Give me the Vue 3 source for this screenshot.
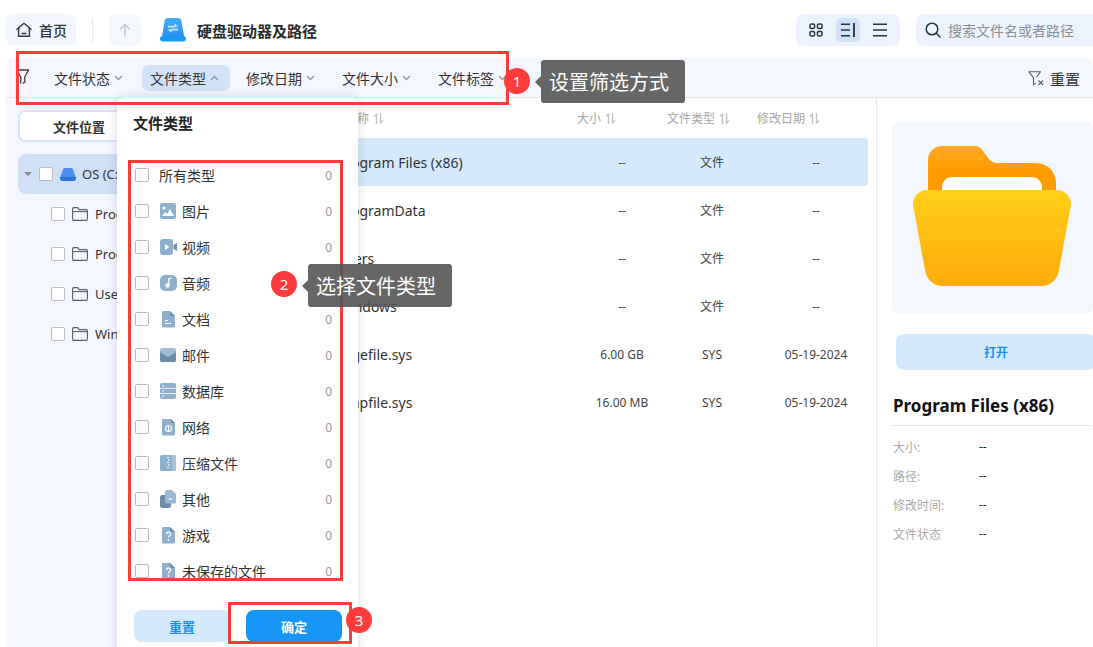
<script setup>
const filters = [
  { label: '文件状态' },
  { label: '文件类型', active: true },
  { label: '修改日期' },
  { label: '文件大小' },
  { label: '文件标签' }
]
const tree = ['Program Files (x86)', 'ProgramData', 'Users', 'Windows']
const types = [
  { label: '所有类型', icon: '' },
  { label: '图片', icon: 'image' },
  { label: '视频', icon: 'video' },
  { label: '音频', icon: 'audio' },
  { label: '文档', icon: 'doc' },
  { label: '邮件', icon: 'mail' },
  { label: '数据库', icon: 'db' },
  { label: '网络', icon: 'net' },
  { label: '压缩文件', icon: 'zip' },
  { label: '其他', icon: 'other' },
  { label: '游戏', icon: 'unknown' },
  { label: '未保存的文件', icon: 'unknown' }
]
const files = [
  { name: 'Program Files (x86)', size: '--', type: '文件', date: '--', selected: true },
  { name: 'ProgramData', size: '--', type: '文件', date: '--' },
  { name: 'Users', size: '--', type: '文件', date: '--' },
  { name: 'Windows', size: '--', type: '文件', date: '--' },
  { name: 'pagefile.sys', size: '6.00 GB', type: 'SYS', date: '05-19-2024', indent: -2 },
  { name: 'swapfile.sys', size: '16.00 MB', type: 'SYS', date: '05-19-2024', indent: -3 }
]
const columns = ['大小', '文件类型', '修改日期']
const props = ['大小:', '路径:', '修改时间:', '文件状态']
</script>

<template>
  <div class="app">
    <header class="top">
      <button class="home">
        <svg width="16" height="16" viewBox="0 0 16 16" fill="none" stroke="#333c48" stroke-width="1.5" stroke-linejoin="round" stroke-linecap="round">
          <path d="M1 7.2 8 1.2l7 6" />
          <path d="M2.6 6v8.200h10.800V6" />
          <path d="M6 11.400h4" />
        </svg>
        首页
      </button>
      <span class="sep"></span>
      <button class="up">
        <svg width="14" height="14" viewBox="0 0 14 14" fill="none" stroke="#c3cad3" stroke-width="1.6" stroke-linecap="round" stroke-linejoin="round">
          <path d="M7 13V1.500M2.500 6 7 1.500 11.500 6" />
        </svg>
      </button>
      <svg class="logo" width="26" height="24" viewBox="0 0 26 24">
        <defs>
          <linearGradient id="dome" x1="0" y1="0" x2="0" y2="1">
            <stop offset="0" stop-color="#45aefc" />
            <stop offset="1" stop-color="#2b8ff0" />
          </linearGradient>
        </defs>
        <path d="M4.500 3.500A3.500 3.500 0 0 1 8 0h10a3.500 3.500 0 0 1 3.500 3.500L24 18H2Z" fill="url(#dome)" />
        <rect x="0" y="18" width="26" height="5.500" rx="2.700" fill="#159bf5" />
        <path d="M8 8.600h7.500M18 11.600h-7.500" fill="none" stroke="#cfe9ff" stroke-width="1.600" />
        <path d="M14.500 5.400l4 3.200h-4ZM11.500 14.800l-4-3.200h4Z" fill="#cfe9ff" />
      </svg>
      <h1 class="title">硬盘驱动器及路径</h1>
      <div class="views">
        <span class="view">
          <svg width="14" height="14" viewBox="0 0 14 14" fill="none" stroke="#2a3340" stroke-width="1.5">
            <rect x="1" y="1" width="4.600" height="4.600" rx="1.400" />
            <rect x="8.400" y="1" width="4.600" height="4.600" rx="1.400" />
            <rect x="1" y="8.400" width="4.600" height="4.600" rx="1.400" />
            <rect x="8.400" y="8.400" width="4.600" height="4.600" rx="1.400" />
          </svg>
        </span>
        <span class="view on">
          <svg width="14" height="14" viewBox="0 0 14 14" fill="none" stroke="#2a3340" stroke-width="1.5">
            <path d="M0 1.200h9M0 7h9M0 12.800h9" />
            <path d="M13 0v14" stroke-width="1.8" />
          </svg>
        </span>
        <span class="view">
          <svg width="14" height="14" viewBox="0 0 14 14" fill="none" stroke="#2a3340" stroke-width="1.5">
            <path d="M0 1.200h14M0 7h14M0 12.800h14" />
          </svg>
        </span>
      </div>
      <div class="search">
        <svg width="16" height="16" viewBox="0 0 16 16" fill="none" stroke="#2a3340" stroke-width="1.5" stroke-linecap="round">
          <circle cx="7" cy="7" r="5.800" />
          <path d="M11.500 11.500 15 15" />
        </svg>
        <span>搜索文件名或者路径</span>
      </div>
    </header>

    <nav class="filters">
      <svg class="funnel" width="15" height="16" viewBox="0 0 15 16" fill="none" stroke="#333c48" stroke-width="1.300" stroke-linejoin="round">
        <path d="M1 1h13M1.500 1 5.800 8v6.500M13.500 1 9.800 8v5l-2 1.500" />
      </svg>
      <div v-for="f in filters" :key="f.label" class="filter" :class="{ active: f.active }">
        {{ f.label }}
        <svg width="9" height="6" viewBox="0 0 9 6" fill="none" stroke="#8b929c" stroke-width="1.300">
          <path :d="f.active ? 'M1 5l3.500-3.500L8 5' : 'M1 1l3.500 3.500L8 1'" />
        </svg>
      </div>
      <div class="clear">
        <svg width="17" height="15" viewBox="0 0 17 15" fill="none" stroke="#555d68" stroke-width="1.100" stroke-linejoin="round">
          <path d="M.5 .8h12.500M1 .8l4.500 6v7l2-1.500M12.500 .8 8.500 6.300" />
          <path d="M10.500 9.500l4.500 4.500M15 9.500 10.500 14" />
        </svg>
        重置
      </div>
    </nav>

    <div class="body">
      <aside class="side">
        <div class="tab">文件位置</div>
        <div class="drive">
          <i class="caret"></i>
          <i class="box"></i>
          <svg width="16" height="13" viewBox="0 0 16 13">
            <path d="M3 1.500A1.500 1.500 0 0 1 4.500 0h7A1.500 1.500 0 0 1 13 1.500L16 10H0Z" fill="#4a90f2" />
            <path d="M0 9h16v1.500A2.500 2.500 0 0 1 13.500 13h-11A2.500 2.500 0 0 1 0 10.500Z" fill="#2a74dc" />
          </svg>
          <span>OS (C:)</span>
        </div>
        <div v-for="t in tree" :key="t" class="node">
          <i class="box"></i>
          <svg width="16" height="14" viewBox="0 0 16 14" fill="none" stroke="#555d68" stroke-width="1.100" stroke-linejoin="round">
            <path d="M.6 12V2A1.400 1.400 0 0 1 2 .6h3.600l1.700 2H14A1.400 1.400 0 0 1 15.400 4v8A1.400 1.400 0 0 1 14 13.400H2A1.400 1.400 0 0 1 .6 12Z" />
            <path d="M.6 4.600h14.800" />
          </svg>
          <span>{{ t }}</span>
        </div>
      </aside>

      <main class="list">
        <div class="grid head">
          <div class="name-cell hname">名称 <svg class="sort" width="11" height="11" viewBox="0 0 11 11" fill="none" stroke="#c4c4c4" stroke-width="1.400"><path d="M3.500 11V1L1 3.500M7.500 0v10L10 7.500" /></svg></div>
          <div v-for="c in columns" :key="c">{{ c }} <svg class="sort" width="11" height="11" viewBox="0 0 11 11" fill="none" stroke="#c4c4c4" stroke-width="1.400"><path d="M3.500 11V1L1 3.500M7.500 0v10L10 7.500" /></svg></div>
        </div>
        <div v-for="f in files" :key="f.name" class="grid row" :class="{ selected: f.selected }">
          <div class="name-cell fname"><span :style="{ marginLeft: (f.indent || 0) + 'px' }">{{ f.name }}</span></div>
          <div class="val">{{ f.size }}</div>
          <div class="val">{{ f.type }}</div>
          <div class="val date">{{ f.date }}</div>
        </div>
      </main>

      <section class="panel">
        <div class="preview">
          <svg width="201" height="192" viewBox="0 0 201 192">
            <defs>
              <linearGradient id="back" x1="0" y1="0" x2="0" y2="1">
                <stop offset="0" stop-color="#ffa824" />
                <stop offset=".5" stop-color="#ff9c00" />
              </linearGradient>
              <linearGradient id="front" x1="0" y1="0" x2="0" y2="1">
                <stop offset="0" stop-color="#ffd01a" />
                <stop offset="1" stop-color="#ffab0b" />
              </linearGradient>
            </defs>
            <path d="M36 70V38a14 14 0 0 1 14-14h32q6 0 9 5l6 8q3 4 8 4h39a20 20 0 0 1 20 20v14Z" fill="url(#back)" />
            <path d="M50 70V65a10 10 0 0 1 10-10h80a10 10 0 0 1 10 10v5Z" fill="#fff" />
            <path d="M35 68h130a14 14 0 0 1 14 15l-12 65a18 18 0 0 1-18 16H51a18 18 0 0 1-18-16L21 83a14 14 0 0 1 14-15Z" fill="url(#front)" />
          </svg>
        </div>
        <button class="open">打开</button>
        <h2 class="pname">Program Files (x86)</h2>
        <dl class="props">
          <div v-for="p in props" :key="p" class="prop">
            <dt>{{ p }}</dt>
            <dd>--</dd>
          </div>
        </dl>
      </section>
    </div>

    <div class="popup">
      <div class="pop-title">文件类型</div>
      <div class="types">
        <div v-for="t in types" :key="t.label" class="type">
          <i class="box"></i>
          <svg v-if="t.icon" class="ticon" width="17" height="18" viewBox="0 0 17 18">
            <template v-if="t.icon === 'image'">
              <rect y="1" width="16" height="16" rx="2" fill="#8eb0cc" />
              <circle cx="4" cy="6" r="1.600" fill="#fff" />
              <path d="M2 14l3-4 2 2 3-5 4 7Z" fill="#fff" />
            </template>
            <template v-else-if="t.icon === 'video'">
              <rect y="1" width="13" height="16" rx="3" fill="#8eb0cc" />
              <path d="M5 6l4.500 3L5 12Z" fill="#fff" />
              <path d="M13.500 7 17 5v8l-3.500-2Z" fill="#6d90ad" />
            </template>
            <template v-else-if="t.icon === 'audio'">
              <rect y="1" width="17" height="16" rx="5" fill="#8eb0cc" />
              <circle cx="7.500" cy="11.500" r="2.200" fill="#fff" />
              <path d="M8.800 11V5l2.700-.8" stroke="#fff" stroke-width="1.300" fill="none" />
            </template>
            <template v-else-if="t.icon === 'doc'">
              <path d="M3 1h7l5 5v10a1.500 1.500 0 0 1-1.500 1.500h-10A1.500 1.500 0 0 1 2 16V2a1 1 0 0 1 1-1Z" fill="#8eb0cc" />
              <path d="M10 1l5 5h-5Z" fill="#6d90ad" />
              <path d="M5 10.500h3M5 13.500h6" stroke="#fff" stroke-width="1.100" />
            </template>
            <template v-else-if="t.icon === 'mail'">
              <rect y="2" width="16" height="14" rx="2" fill="#a0bdd5" />
              <path d="M0 6l8 5 8-5v8a2 2 0 0 1-2 2H2a2 2 0 0 1-2-2Z" fill="#6d8ca8" />
            </template>
            <template v-else-if="t.icon === 'db'">
              <rect y="1" width="16" height="16" rx="2" fill="#8eb0cc" />
              <path d="M0 6.300h16M0 11.600h16" stroke="#eef3f8" stroke-width="1" />
              <path d="M2.500 3.700h1.500M2.500 9h1.500M2.500 14.300h1.500" stroke="#fff" stroke-width="1.200" />
            </template>
            <template v-else-if="t.icon === 'net'">
              <path d="M3 1h8l4 4v11a1.500 1.500 0 0 1-1.500 1.500h-10A1.500 1.500 0 0 1 2 16V2a1 1 0 0 1 1-1Z" fill="#8eb0cc" />
              <path d="M11 1l4 4h-4Z" fill="#6d90ad" />
              <circle cx="8.500" cy="10.500" r="3" fill="none" stroke="#fff" stroke-width="1.100" />
              <path d="M8.500 7.500v6" stroke="#fff" stroke-width="1.100" />
            </template>
            <template v-else-if="t.icon === 'zip'">
              <rect y="1" width="16" height="16" rx="1.500" fill="#8eb0cc" />
              <path d="M12 1h2.500A1.500 1.500 0 0 1 16 2.500v13a1.500 1.500 0 0 1-1.500 1.500H12Z" fill="#a8c3da" />
              <path d="M7 3.500h2M8 6h2M7 8.500h2M8 11h2M7 13.500h2" stroke="#fff" stroke-width="1.200" />
            </template>
            <template v-else-if="t.icon === 'other'">
              <rect y="5" width="11" height="13" rx="2.500" fill="#6d8ca8" />
              <path d="M6.500 0H12l4 4v8a1.500 1.500 0 0 1-1.500 1.500h-8A1.500 1.500 0 0 1 5 12V1.500A1.500 1.500 0 0 1 6.500 0Z" fill="#9ab8d2" />
              <path d="M8.500 9h3.500" stroke="#fff" stroke-width="1.200" />
            </template>
            <template v-else>
              <path d="M3 1h7l5 5v10a1.500 1.500 0 0 1-1.500 1.500h-10A1.500 1.500 0 0 1 2 16V2a1 1 0 0 1 1-1Z" fill="#8eb0cc" />
              <path d="M10 1l5 5h-5Z" fill="#6d90ad" />
              <path d="M6.500 8a2 2 0 1 1 3 1.700c-.8.500-1 .9-1 1.800" fill="none" stroke="#fff" stroke-width="1.300" />
              <circle cx="8.500" cy="14" r=".9" fill="#fff" />
            </template>
          </svg>
          <span class="tlabel" :class="{ plain: !t.icon }">{{ t.label }}</span>
          <span class="count">0</span>
        </div>
      </div>
      <div class="pop-foot">
        <button class="reset">重置</button>
        <button class="ok">确定</button>
      </div>
    </div>

    <i class="mark m1"></i>
    <i class="mark m2"></i>
    <i class="mark m3"></i>
    <span class="badge b1">1</span>
    <span class="badge b2">2</span>
    <span class="badge b3">3</span>
    <span class="tip t1">设置筛选方式</span>
    <span class="tip t2">选择文件类型</span>
  </div>
</template>

<style>
html, body { margin: 0; background: #fff; }
</style>

<style scoped>
* { box-sizing: border-box; }
.app {
  position: relative;
  width: 1093px;
  height: 647px;
  overflow: hidden;
  background: #fff;
  color: #222;
  font-family: "Noto Sans", "Noto Sans CJK SC", sans-serif;
  font-size: 14px;
}
button { font-family: inherit; border: 0; padding: 0; }
i { display: block; font-style: normal; }

.top { display: flex; align-items: center; height: 58px; padding: 14px 0 12px 6px; }
.home {
  display: flex; align-items: center; gap: 7px;
  width: 70px; height: 32px; padding-left: 10px;
  background: #f2f6fd; border-radius: 8px;
  color: #333; font-size: 14px; font-weight: 500;
}
.sep { width: 1px; height: 24px; background: #e4e7eb; margin: 0 16px; }
.up {
  display: flex; align-items: center; justify-content: center;
  width: 32px; height: 32px; background: #f4f7fd; border-radius: 8px;
}
.logo { margin-left: 19px; }
.title { margin: 0 0 0 11px; font-size: 15px; font-weight: 700; color: #2a2a2a; }
.views {
  display: flex; gap: 8px; margin-left: auto;
  width: 104px; height: 32px; padding: 4px 8px;
  background: #edf3fc; border-radius: 8px;
}
.view { display: flex; align-items: center; justify-content: center; width: 24px; height: 24px; border-radius: 5px; }
.view.on { background: #d2e2f8; }
.search {
  display: flex; align-items: center; gap: 7px;
  width: 177px; height: 32px; margin-left: 16px; padding-left: 9px;
  background: #edf3fc; border-radius: 8px 0 0 8px;
  color: #8a8f96; font-size: 14px; white-space: nowrap;
}

.filters {
  display: flex; align-items: center; gap: 8px;
  height: 40px; margin-left: 6px; padding: 1px 13px 0 9px;
  background: #f4f8fe; border-radius: 8px 8px 0 0;
  border-bottom: 1px solid #e3e6ea;
}
.funnel { margin: -2px 8px 0 0; flex: none; }
.filter {
  display: flex; align-items: center; gap: 4px;
  width: 88px; height: 26px; padding-left: 8px; border-radius: 7px; white-space: nowrap; color: #333;
}
.filter.active { background: #d2e2f8; }
.clear { display: flex; align-items: center; gap: 5px; margin-left: auto; color: #333; font-size: 15px; }

.body { display: flex; height: 549px; }
.side { flex: 0 0 204px; margin-left: 6px; padding: 12px 12px 0; background: #f4f8fe; overflow: hidden; }
.tab {
  display: flex; align-items: center; justify-content: center;
  width: 122px; height: 32px;
  background: #fff; border: 2px solid #d8e5f8; border-radius: 7px;
  font-size: 13px; font-weight: 700; color: #333;
}
.drive {
  display: flex; align-items: center;
  height: 40px; margin-top: 12px; padding-left: 6px;
  background: #d0e0f7; border-radius: 8px; font-size: 13px; color: #333;
}
.caret {
  width: 0; height: 0; margin-right: 7px;
  border: 4px solid transparent; border-top: 4px solid #888; border-bottom: 0;
}
.drive .box { margin-right: 7px; }
.drive span { margin-left: 6px; }
.node {
  display: flex; align-items: center; gap: 7px;
  height: 40px; padding-left: 33px;
  font-size: 13px; color: #333; white-space: nowrap;
}
.node svg { flex: none; }
.box { flex: none; width: 14px; height: 14px; background: #fff; border: 1px solid #bbb; border-radius: 2px; }

.list { flex: 1; min-width: 0; padding-right: 8px; }
.grid { display: grid; grid-template-columns: 367px 90px 90px 1fr; align-items: center; }
.name-cell { padding-left: 127px; white-space: nowrap; overflow: hidden; }
.hname { padding-left: 135px; }
.head { height: 40px; font-size: 12px; color: #a5a5a5; }
.sort { vertical-align: -1px; margin-left: 1px; }
.row { height: 48px; border-radius: 4px; font-size: 12px; color: #444; }
.row.selected { background: #d4eafc; }
.fname { font-size: 14px; color: #333; }
.val { text-align: center; }
.date { padding-left: 7px; }

.panel { flex: 0 0 217px; border-left: 1px solid #e8e8e8; overflow: hidden; padding-top: 24px; }
.preview { width: 201px; height: 192px; margin-left: 15px; background: #f4f8fe; border-radius: 6px; }
.preview svg { display: block; }
.open {
  display: block; width: 200px; height: 36px; margin: 20px 0 0 19px;
  background: #d4eafc; border-radius: 8px;
  color: #1a90ee; font-size: 12px; font-weight: 700;
}
.pname { margin: 24px 0 0 16px; font-size: 17px; line-height: 24px; font-weight: 700; color: #111; white-space: nowrap; }
.props { margin: 7px 0 0 15px; padding: 6px 0 0; width: 200px; border-top: 1px solid #e6e6e6; }
.prop { display: flex; align-items: center; height: 29px; font-size: 12px; }
.prop dt { width: 87px; padding-left: 1px; color: #aaa; }
.prop dd { margin: 0; color: #222; }

.popup {
  position: absolute; left: 117px; top: 97px;
  display: flex; flex-direction: column;
  width: 241px; height: 560px;
  background: #fff; border-radius: 8px 8px 0 0;
  box-shadow: 0 0 12px rgba(0, 0, 0, .14);
}
.pop-title { height: 60px; padding: 16px 0 0 16px; font-size: 15px; line-height: 20px; font-weight: 700; color: #222; }
.types { height: 422px; overflow: hidden; }
.type { display: flex; align-items: center; height: 36px; padding: 0 26px 0 18px; color: #333; white-space: nowrap; }
.ticon { margin-left: 11px; flex: none; }
.tlabel { margin-left: 5px; font-size: 14px; }
.tlabel.plain { margin-left: 10px; }
.count { margin-left: auto; font-size: 12px; color: #999; }
.pop-foot { display: flex; gap: 16px; padding: 31px 0 0 17px; }
.reset, .ok { width: 96px; height: 32px; border-radius: 8px; font-size: 13px; font-weight: 700; }
.reset { background: #d4eafc; color: #1a90ee; }
.ok { background: #1595f5; color: #fff; }

.mark { position: absolute; border: 3px solid #ff3b3b; pointer-events: none; }
.m1 { left: 16px; top: 51px; width: 493px; height: 54px; }
.m2 { left: 128px; top: 160px; width: 215px; height: 421px; }
.m3 { left: 228px; top: 602px; width: 124px; height: 42px; }
.badge {
  position: absolute; display: flex; align-items: center; justify-content: center;
  width: 26px; height: 26px; border-radius: 50%;
  background: #ff3b3b; color: #fff; font-size: 15px;
}
.b1 { left: 504px; top: 68px; }
.b2 { left: 271px; top: 271px; }
.b3 { left: 346px; top: 607px; }
.tip {
  position: absolute; display: flex; align-items: center; justify-content: center;
  width: 144px; height: 43px; padding-right: 8px; border-radius: 3px;
  background: rgba(85, 85, 85, .9); color: #fff; font-size: 20px; white-space: nowrap;
}
.tip::before {
  content: ""; position: absolute; left: -6px; top: 16px;
  border: 6px solid transparent; border-right-color: rgba(85, 85, 85, .9); border-left: 0;
}
.t1 { left: 541px; top: 60px; }
.t2 { left: 308px; top: 264px; }
</style>
